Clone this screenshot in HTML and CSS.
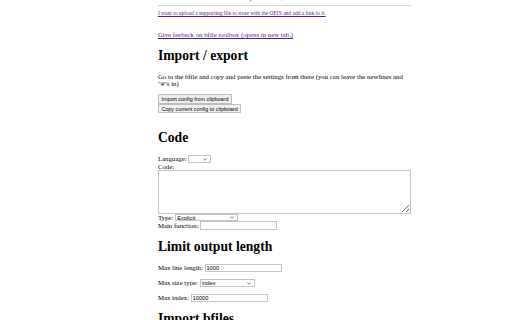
FILE: index.html
```html
<!DOCTYPE html>
<html lang="en">
<head>
    <meta charset="UTF-8">
    <title>bfile toolbox options</title>
    <link rel="stylesheet" href="styles.css">
</head>
<body>
    <div class="page">
        <p class="top-line">Comments will be added to the top of the file, after the header.</p>
        <hr>
        <div class="upload"><a href="#" class="visited">I want to upload a supporting file to store with the OEIS and add a link to it.</a></div>

        <p class="feedback"><a href="#" class="visited">Give feeback on bfile toolbox (opens in new tab.)</a></p>

        <h1>Import / export</h1>
        <p>Go to the bfile and copy and paste the settings from there (you can leave the newlines and "#"s in)</p>
        <div class="actions">
            <button>Import config from clipboard</button><br>
            <button>Copy current config to clipboard</button>
        </div>

        <h1>Code</h1>
        <label>Language: <select class="lang"></select></label><br>
        <label for="code">Code:</label>
        <textarea id="code" class="code"></textarea>
        <label>Type: <select class="type"><option>Explicit</option></select></label><br>
        <label>Main function: <input type="text" class="field"></label>

        <h1>Limit output length</h1>
        <p><label>Max line length: <input type="text" class="field" value="1000"></label></p>
        <p><label>Max size type: <select class="size-type"><option>index</option></select></label></p>
        <p><label>Max index: <input type="text" class="field" value="10000"></label></p>

        <h1>Import bfiles</h1>
    </div>
</body>
</html>
```

FILE: styles.css
```css
html {
    zoom: 0.4267;
}

* {
    box-sizing: border-box;
}

body {
    margin: 0;
    font-family: "Liberation Serif", "Times New Roman", serif;
    font-size: 16px;
    color: #000;
}

.page {
    width: 593px;
    margin: -15px 0 0 370px;
}

.top-line {
    margin: 0;
    padding-bottom: 3px;
}

hr {
    margin: 8px 0;
    height: 0;
    border: none;
    border-top: 2px solid #d2d2d2;
}

a {
    color: #0000ee;
}

a.visited {
    color: #551a8b;
}

.upload {
    font-size: 12.9px;
}

.feedback {
    margin: 36px 0 24px;
}

h1 {
    font-size: 32px;
    margin: 21px 0;
}

.actions {
    margin-bottom: 40px;
}

button {
    font-family: "Liberation Sans", Arial, sans-serif;
    font-size: 12.7px;
    padding: 2px 6px;
    color: #000;
    background: #efefef;
    border: 1px solid #bdbdbd;
    border-radius: 2px;
}

input,
select,
textarea {
    font-family: "Liberation Sans", Arial, sans-serif;
    font-size: 13.33px;
    color: #000;
    background-color: #fff;
    border: 1px solid #c4c4c4;
}

input {
    height: 20px;
    padding: 1px 2px;
}

select {
    appearance: none;
    height: 18px;
    padding: 0 16px 0 3px;
    border-radius: 2px;
    background-image: url("data:image/svg+xml,%3Csvg xmlns='http://www.w3.org/2000/svg' width='9' height='6'%3E%3Cpath d='M1 1l3.5 3.5L8 1' fill='none' stroke='%23444' stroke-width='1.4'/%3E%3C/svg%3E");
    background-repeat: no-repeat;
    background-position: right 7px center;
}

.code {
    display: block;
    width: 593px;
    height: 102px;
    padding: 2px;
}

.lang {
    width: 52px;
}

.type {
    width: 148px;
}

.size-type {
    width: 129px;
}

.field {
    width: 181px;
}
```
